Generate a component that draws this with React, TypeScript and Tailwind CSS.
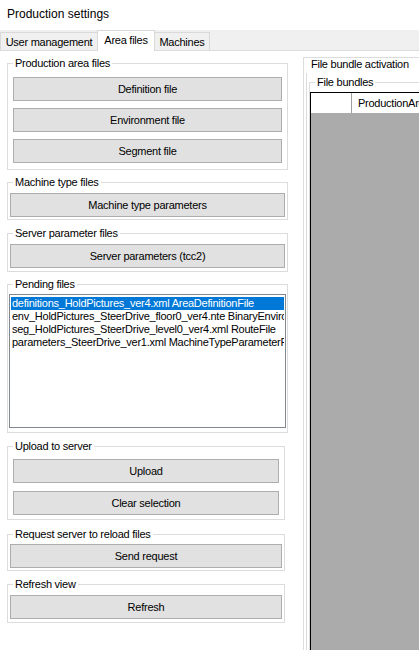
import React from "react";

function Btn({ label, className = "" }: { label: string; className?: string }) {
  return (
    <button
      type="button"
      className={
        "flex h-[24px] w-full items-center justify-center border border-[#adadad] bg-[#e1e1e1] leading-[13px] text-black " +
        className
      }
    >
      {label}
    </button>
  );
}

function Group({
  title,
  className,
  children,
}: {
  title: string;
  className: string;
  children: React.ReactNode;
}) {
  return (
    <fieldset className={"min-w-0 border border-[#dcdcdc] " + className}>
      <legend className="ml-[5px] px-[2px] leading-[13px]">{title}</legend>
      {children}
    </fieldset>
  );
}

const pending = [
  "definitions_HoldPictures_ver4.xml AreaDefinitionFile",
  "env_HoldPictures_SteerDrive_floor0_ver4.nte BinaryEnvironmentFile",
  "seg_HoldPictures_SteerDrive_level0_ver4.xml RouteFile",
  "parameters_SteerDrive_ver1.xml MachineTypeParameterFile",
];

export default function App() {
  return (
    <div className="flex h-[650px] w-[419px] flex-col overflow-hidden bg-white font-['Liberation_Sans',Arial,sans-serif] text-[11px] tracking-[-0.25px] text-black">
      <div className="h-[30px] shrink-0 pl-[7px] pt-[7px] text-[12px] leading-[14px] tracking-normal">
        Production settings
      </div>

      <div className="flex h-[21px] shrink-0 items-end border-b border-[#dcdcdc] bg-[#f0f0f0]">
        <div className="flex h-[18px] w-[97px] justify-center border-l border-t border-[#d9d9d9] pt-[3px] leading-[13px]">
          User management
        </div>
        <div className="relative z-10 -mb-px flex h-[21px] w-[58px] justify-center border-x border-t border-[#d9d9d9] bg-white pt-[3px] leading-[13px]">
          Area files
        </div>
        <div className="flex h-[18px] w-[55px] justify-center border-r border-t border-[#d9d9d9] pt-[3px] leading-[13px]">
          Machines
        </div>
      </div>

      <div className="flex min-h-0 flex-1">
        <div className="flex w-[303px] shrink-0 flex-col pl-[7px]">
          <Group title="Production area files" className="mt-[6px] w-[281px]">
            <div className="flex flex-col gap-[7px] px-[5px] pb-[6px] pt-[7px]">
              <Btn label="Definition file" />
              <Btn label="Environment file" />
              <Btn label="Segment file" />
            </div>
          </Group>

          <Group title="Machine type files" className="mt-[6px] w-[281px]">
            <div className="px-[2px] pb-[2px] pt-[4px]">
              <Btn label="Machine type parameters" />
            </div>
          </Group>

          <Group title="Server parameter files" className="mt-[7px] w-[281px]">
            <div className="px-[2px] pb-[3px] pt-[4px]">
              <Btn label="Server parameters (tcc2)" />
            </div>
          </Group>

          <Group title="Pending files" className="mt-[6px] w-[281px]">
            <div className="px-[1px] pb-[4px] pt-[3px]">
              <div className="h-[134px] w-full overflow-hidden border border-[#828790] bg-white px-[1px] pt-[2px]">
                {pending.map((p, i) => (
                  <div
                    key={p}
                    className={
                      "h-[13px] overflow-hidden whitespace-nowrap pl-[1px] leading-[13px] " +
                      (i === 0 ? "bg-[#0078d7] text-white" : "text-black")
                    }
                  >
                    {p}
                  </div>
                ))}
              </div>
            </div>
          </Group>

          <Group title="Upload to server" className="mt-[7px] w-[278px]">
            <div className="flex flex-col gap-[8px] px-[5px] pb-[4px] pt-[6px]">
              <Btn label="Upload" />
              <Btn label="Clear selection" />
            </div>
          </Group>

          <Group title="Request server to reload files" className="mt-[8px] w-[278px]">
            <div className="px-[2px] pb-[2px] pt-[3px]">
              <Btn label="Send request" />
            </div>
          </Group>

          <Group title="Refresh view" className="mt-[7px] w-[278px]">
            <div className="px-[2px] pb-[3px] pt-[4px]">
              <Btn label="Refresh" />
            </div>
          </Group>
        </div>

        <div className="mt-[6px] flex min-w-0 flex-1 flex-col overflow-hidden border-l border-[#dcdcdc]">
          <div className="h-[16px] shrink-0 whitespace-nowrap border-t border-[#dcdcdc] bg-white pl-[7px] leading-[12px]">
            File bundle activation
          </div>
          <div className="ml-[2px] flex-1 border-l border-[#dcdcdc] pl-[2px] pt-[3px]">
            <fieldset className="h-[600px] w-[300px] min-w-0 border border-[#dcdcdc]">
              <legend className="ml-[5px] px-[2px] leading-[13px]">File bundles</legend>
              <div className="pt-[3px]">
                <div className="h-[600px] w-[300px] border-l border-t border-black bg-[#ababab]">
                  <div className="flex h-[20px] bg-white">
                    <div className="w-[41px] shrink-0 border-r border-[#a0a0a0]" />
                    <div className="flex items-center whitespace-nowrap pl-[6px] leading-[13px]">
                      ProductionArea
                    </div>
                  </div>
                </div>
              </div>
            </fieldset>
          </div>
        </div>
      </div>
    </div>
  );
}
